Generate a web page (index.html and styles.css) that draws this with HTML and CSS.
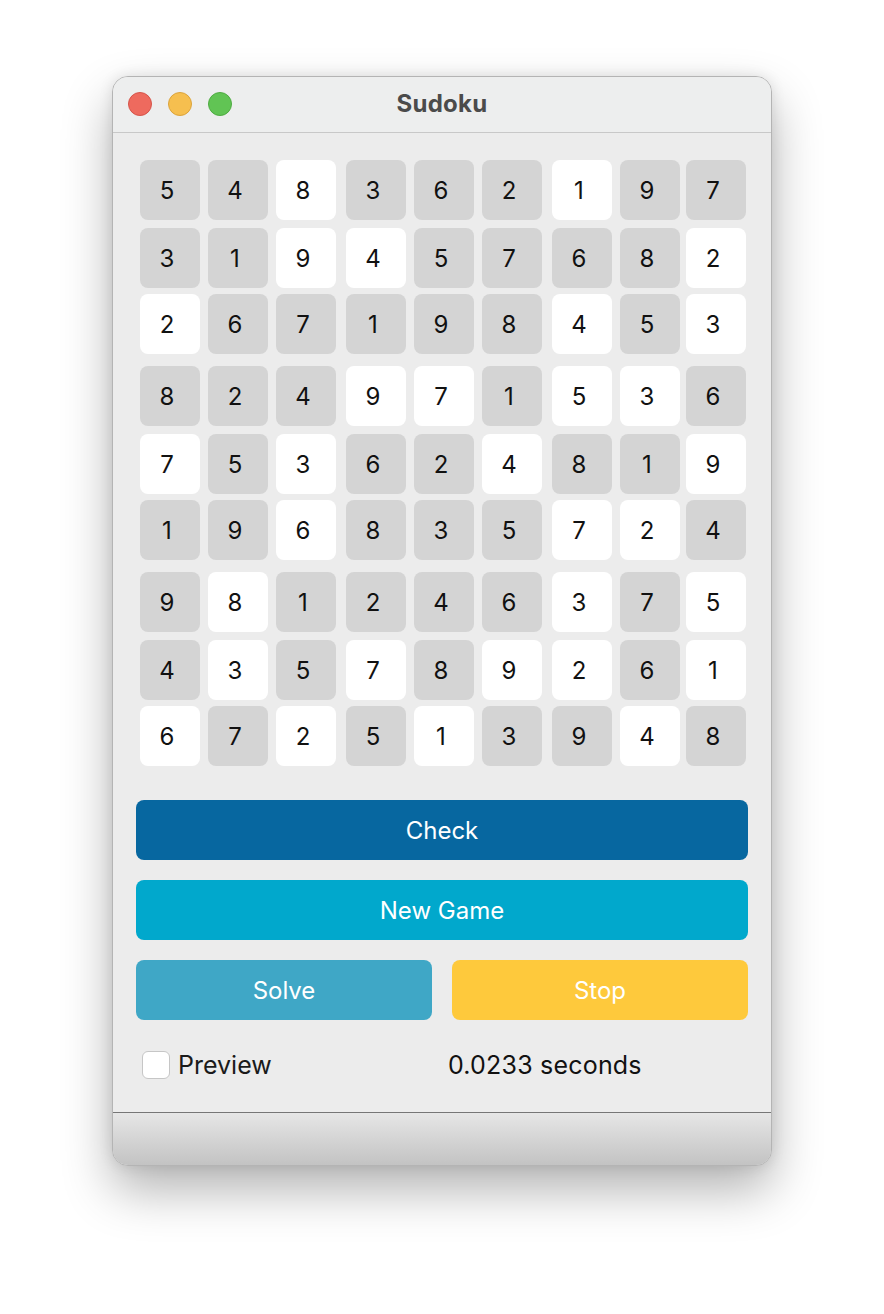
FILE: index.html
```html
<!DOCTYPE html>
<html>
<head>
<meta charset="utf-8">
<title>Sudoku</title>
<link rel="stylesheet" href="styles.css">
</head>
<body>
<div class="window">
  <div class="titlebar">
    <div class="lights">
      <span class="light red"></span>
      <span class="light yellow"></span>
      <span class="light green"></span>
    </div>
    <div class="title">Sudoku</div>
  </div>
  <div class="content">
    <div class="board">
      <div class="cell g">5</div><div class="cell g">4</div><div class="cell w">8</div><div class="cell g">3</div><div class="cell g">6</div><div class="cell g">2</div><div class="cell w">1</div><div class="cell g">9</div><div class="cell g">7</div>
      <div class="cell g">3</div><div class="cell g">1</div><div class="cell w">9</div><div class="cell w">4</div><div class="cell g">5</div><div class="cell g">7</div><div class="cell g">6</div><div class="cell g">8</div><div class="cell w">2</div>
      <div class="cell w">2</div><div class="cell g">6</div><div class="cell g">7</div><div class="cell g">1</div><div class="cell g">9</div><div class="cell g">8</div><div class="cell w">4</div><div class="cell g">5</div><div class="cell w">3</div>
      <div class="cell g">8</div><div class="cell g">2</div><div class="cell g">4</div><div class="cell w">9</div><div class="cell w">7</div><div class="cell g">1</div><div class="cell w">5</div><div class="cell w">3</div><div class="cell g">6</div>
      <div class="cell w">7</div><div class="cell g">5</div><div class="cell w">3</div><div class="cell g">6</div><div class="cell g">2</div><div class="cell w">4</div><div class="cell g">8</div><div class="cell g">1</div><div class="cell w">9</div>
      <div class="cell g">1</div><div class="cell g">9</div><div class="cell w">6</div><div class="cell g">8</div><div class="cell g">3</div><div class="cell g">5</div><div class="cell w">7</div><div class="cell w">2</div><div class="cell g">4</div>
      <div class="cell g">9</div><div class="cell w">8</div><div class="cell g">1</div><div class="cell g">2</div><div class="cell g">4</div><div class="cell g">6</div><div class="cell w">3</div><div class="cell g">7</div><div class="cell w">5</div>
      <div class="cell g">4</div><div class="cell w">3</div><div class="cell g">5</div><div class="cell w">7</div><div class="cell g">8</div><div class="cell w">9</div><div class="cell w">2</div><div class="cell g">6</div><div class="cell w">1</div>
      <div class="cell w">6</div><div class="cell g">7</div><div class="cell w">2</div><div class="cell g">5</div><div class="cell w">1</div><div class="cell g">3</div><div class="cell g">9</div><div class="cell w">4</div><div class="cell g">8</div>
    </div>
    <div class="actions">
      <button class="btn check">Check</button>
      <button class="btn newgame">New Game</button>
      <div class="pair">
        <button class="btn solve">Solve</button>
        <button class="btn stop">Stop</button>
      </div>
    </div>
    <div class="options">
      <label class="preview"><span class="box"></span><span>Preview</span></label>
      <div class="time">0.0233 seconds</div>
    </div>
  </div>
  <div class="statusbar"></div>
</div>
</body>
</html>
```

FILE: styles.css
```css
html, body {
  margin: 0;
  padding: 0;
  background: #ffffff;
}
body {
  padding: 76px 0 148px 112px;
  font-family: Inter, "Liberation Sans", sans-serif;
}
.window {
  box-sizing: border-box;
  width: 660px;
  border: 1px solid #b4b4b4;
  border-radius: 16px;
  overflow: hidden;
  background: #ececec;
  box-shadow: 0 24px 50px rgba(0, 0, 0, 0.30), 0 0 14px rgba(0, 0, 0, 0.10);
}
.titlebar {
  height: 55px;
  border-bottom: 1px solid #c8c8c8;
  background: #edeeee;
  display: flex;
  align-items: center;
  justify-content: center;
  position: relative;
}
.lights {
  position: absolute;
  left: 15px;
  top: 15px;
  display: flex;
  gap: 16px;
}
.light {
  box-sizing: border-box;
  width: 24px;
  height: 24px;
  border-radius: 50%;
  display: block;
}
.red { background: #ee6a5e; border: 1px solid #d5544a; }
.yellow { background: #f6bf4f; border: 1px solid #dba33c; }
.green { background: #61c454; border: 1px solid #4fab42; }
.title {
  font-weight: 700;
  font-size: 24px;
  color: #4b4b4b;
  letter-spacing: 0.3px;
  margin-top: -2px;
}
.content {
  padding: 27px 23px 34px 23px;
}
.board {
  margin-left: 4px;
  display: grid;
  grid-template-columns: 68px 68px 70px 68px 68px 70px 68px 66px 60px;
  grid-template-rows: 68px 66px 72px 68px 66px 72px 68px 66px 60px;
}
.cell {
  box-sizing: border-box;
  width: 60px;
  height: 60px;
  padding-right: 6px;
  border-radius: 8px;
  display: flex;
  align-items: center;
  justify-content: center;
  font-size: 24px;
  color: #111;
}
.cell.g { background: #d4d4d4; }
.cell.w { background: #ffffff; }
.actions {
  margin-top: 34px;
  display: flex;
  flex-direction: column;
  gap: 20px;
}
.btn {
  height: 60px;
  border: none;
  border-radius: 8px;
  color: #fff;
  font-family: Inter, "Liberation Sans", sans-serif;
  font-size: 24px;
  padding: 0;
  width: 100%;
}
.check { background: #0767a0; }
.newgame { background: #01a8cc; }
.solve { background: #3fa7c6; }
.stop { background: #fec93c; }
.pair {
  display: grid;
  grid-template-columns: 1fr 1fr;
  gap: 20px;
}
.options {
  margin-top: 30px;
  height: 28px;
  padding-left: 6px;
  display: grid;
  grid-template-columns: 306px auto;
  align-items: center;
  font-size: 25px;
  color: #1a1a1a;
}
.preview {
  display: flex;
  align-items: center;
  gap: 8px;
}
.box {
  box-sizing: border-box;
  width: 28px;
  height: 28px;
  background: #fff;
  border: 1px solid #c6c6c6;
  border-radius: 6px;
}
.time {
  color: #111;
  letter-spacing: 0.2px;
}
.statusbar {
  height: 52px;
  border-top: 1px solid #767676;
  background: linear-gradient(#e6e6e6, #c3c3c3);
}
```
